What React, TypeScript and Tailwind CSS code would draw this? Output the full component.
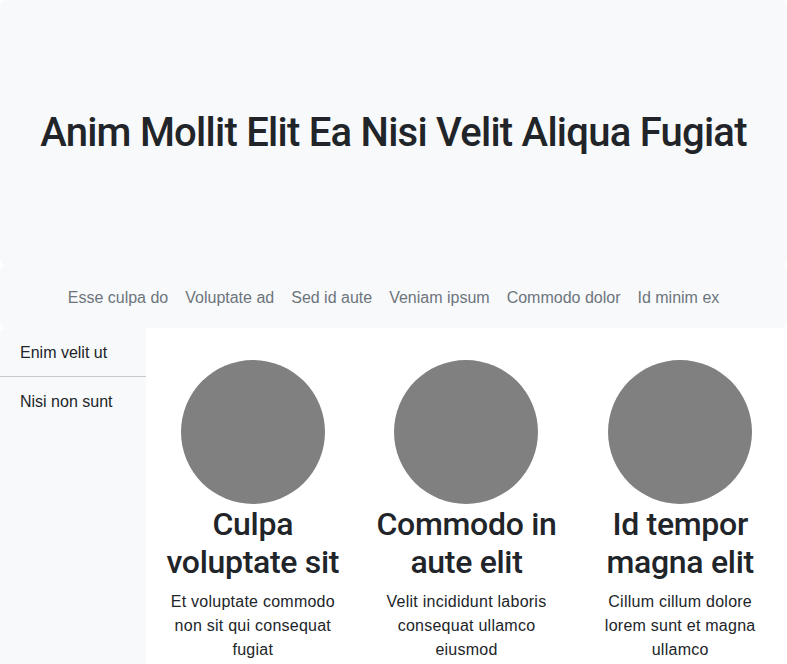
import React from "react";

const links = ["Esse culpa do", "Voluptate ad", "Sed id aute", "Veniam ipsum", "Commodo dolor", "Id minim ex"];

const sideItems = ["Enim velit ut", "Nisi non sunt"];

const features = [
  { title: "Culpa voluptate sit", body: "Et voluptate commodo non sit qui consequat fugiat" },
  { title: "Commodo in aute elit", body: "Velit incididunt laboris consequat ullamco eiusmod" },
  { title: "Id tempor magna elit", body: "Cillum cillum dolore lorem sunt et magna ullamco" },
];

export default function App() {
  return (
    <div className="min-h-[664px] bg-white text-[#212529] font-['Liberation_Sans',Arial,sans-serif]">
      {/* Hero */}
      <div className="flex h-[265px] items-center justify-center rounded-md bg-[#f8f9fa]">
        <h1 className="font-['Roboto',sans-serif] text-[40px] font-medium leading-[1.2] tracking-[-0.75px] text-[#212529]">
          Anim Mollit Elit Ea Nisi Velit Aliqua Fugiat
        </h1>
      </div>

      {/* Nav */}
      <nav className="flex h-[63px] items-center justify-center rounded-md bg-[#f8f9fa] pt-[2px]">
        {links.map((link) => (
          <a key={link} href="#" className="px-[8.5px] py-2 text-base leading-6 text-[#6c757d]">
            {link}
          </a>
        ))}
      </nav>

      <div className="flex">
        {/* Sidebar */}
        <aside className="min-h-[336px] w-[146px] shrink-0 self-stretch rounded-tl-md bg-[#f8f9fa]">
          {sideItems.map((item, i) => (
            <div
              key={item}
              className={`px-5 pb-[11px] pt-[13px] text-base leading-6 ${i === 0 ? "border-b border-[#c8c8c8]" : ""}`}
            >
              {item}
            </div>
          ))}
        </aside>

        {/* Main */}
        <main className="grid flex-1 grid-cols-3 pt-8">
          {features.map((f) => (
            <div key={f.title} className="flex flex-col items-center px-[14px] text-center">
              <div className="h-[144px] w-[144px] rounded-full bg-[#808080]" />
              <h2 className="mb-[9px] mt-px font-['Roboto',sans-serif] text-[32px] font-medium leading-[38px] tracking-[-0.3px]">
                {f.title}
              </h2>
              <p className="text-base leading-6 tracking-[0.25px]">{f.body}</p>
            </div>
          ))}
        </main>
      </div>
    </div>
  );
}
